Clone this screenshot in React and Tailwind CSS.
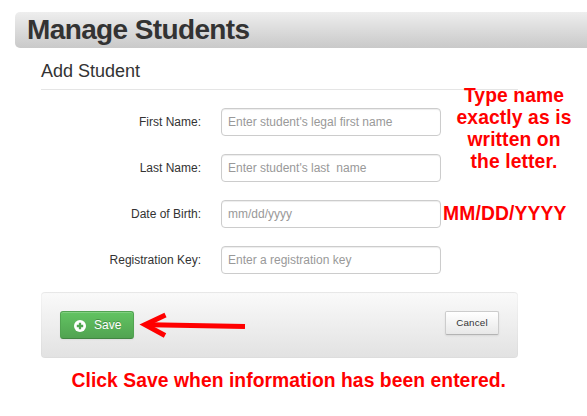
const fields = [
  { id: "firstName", label: "First Name:", placeholder: "Enter student's legal first name" },
  { id: "lastName", label: "Last Name:", placeholder: "Enter student's last  name" },
  { id: "dob", label: "Date of Birth:", placeholder: "mm/dd/yyyy" },
  { id: "regKey", label: "Registration Key:", placeholder: "Enter a registration key" },
];

const App = () => {
  return (
    <div className="relative w-[587px] h-[416px] overflow-hidden bg-white pt-3 pl-[15px] font-['Liberation_Sans',Arial,sans-serif] text-[#333]">
      {/* Page header */}
      <header className="h-9 rounded-l-[5px] bg-linear-to-b from-[#eee] to-[#c9c9c9] pl-3">
        <h1 className="text-[28px] leading-9 font-bold tracking-[-0.62px] whitespace-nowrap">Manage Students</h1>
      </header>

      <form className="ml-[26px] w-[477px]">
        <h2 className="h-[42px] border-b border-[#e5e5e5] pt-[9px] text-[18px] leading-7">Add Student</h2>

        <div className="mt-[18px] flex flex-col gap-[18px]">
          {fields.map((field) => (
            <div key={field.id} className="flex items-center gap-5">
              <label htmlFor={field.id} className="w-40 text-right text-[12px]">
                {field.label}
              </label>
              <input
                id={field.id}
                type="text"
                placeholder={field.placeholder}
                className="h-7 w-[220px] rounded-[4px] border border-[#ccc] bg-white px-1.5 text-[12px] whitespace-pre shadow-[inset_0_1px_1px_rgba(0,0,0,0.075)] placeholder:text-[#999]"
              />
            </div>
          ))}
        </div>

        {/* Form actions */}
        <div className="mt-[18px] flex h-[66px] items-start justify-between rounded-[4px] bg-linear-to-b from-[#fafafa] to-[#e2e2e2] px-[19px] pt-[19px] shadow-[inset_0_0_0_1px_rgba(0,0,0,0.02),inset_0_1px_1px_rgba(0,0,0,0.06)]">
          <button
            type="button"
            className="flex h-7 w-[74px] items-center rounded-[3px] border border-[#51a351] border-b-[#428542] bg-linear-to-b from-[#62c462] to-[#51a351] pl-[13px] text-[12px] text-white shadow-[inset_0_1px_0_rgba(255,255,255,0.2),0_1px_2px_rgba(0,0,0,0.05)] [text-shadow:0_-1px_0_rgba(0,0,0,0.25)]"
          >
            <svg className="mt-0.5 mr-2 size-3 shrink-0" viewBox="0 0 12 12">
              <circle cx="6" cy="6" r="6" fill="#fff" />
              <path d="M6 2.8v6.4M2.8 6h6.4" stroke="#4fa54f" strokeWidth="2.3" />
            </svg>
            Save
          </button>
          <button
            type="button"
            className="h-6 w-[54px] rounded-[2px] border border-[#ccc] border-b-[#b3b3b3] bg-linear-to-b from-white to-[#e8e8e8] text-[9.8px] tracking-[0.2px] shadow-[0_1px_2px_rgba(0,0,0,0.08)]"
          >
            Cancel
          </button>
        </div>
      </form>

      {/* Instruction callouts */}
      <p className="absolute top-[85px] left-[444px] w-[140px] text-center text-[19.3px] leading-[22px] font-bold tracking-[0.1px] text-[#f00]">
        Type name
        <br />
        exactly as is
        <br />
        written on
        <br />
        the letter.
      </p>
      <p className="absolute top-[203px] left-[443px] text-[19.3px] leading-[22px] font-bold tracking-[0.15px] whitespace-nowrap text-[#f00]">
        MM/DD/YYYY
      </p>
      <svg className="absolute top-[310px] left-[138px] h-8 w-[110px]" viewBox="138 310 110 32">
        <path d="M245 326.5 150 324.7" stroke="#f00" strokeWidth="5" />
        <path d="M165.5 315 145 324.7 165 335.5" fill="none" stroke="#f00" strokeWidth="5" strokeMiterlimit="10" />
      </svg>
      <p className="absolute top-[370px] left-[71.5px] text-[19.3px] leading-[22px] font-bold tracking-[0.06px] whitespace-nowrap text-[#f00]">
        Click Save when information has been entered.
      </p>
    </div>
  );
};

export default App;
